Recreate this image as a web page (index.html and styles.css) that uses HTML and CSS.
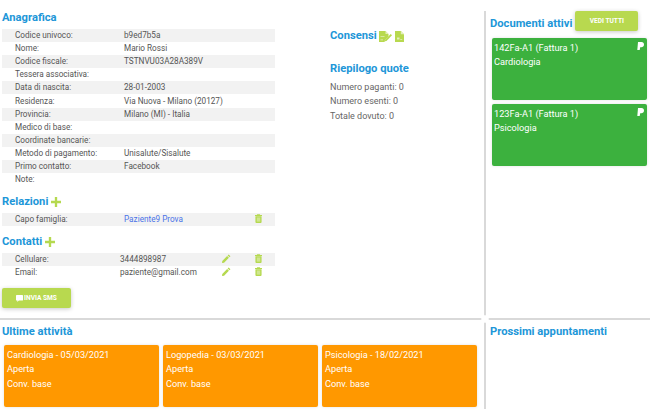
FILE: index.html
```html
<!DOCTYPE html>
<html lang="it">
<head>
<meta charset="utf-8">
<title>Scheda paziente</title>
<link rel="stylesheet" href="styles.css">
</head>
<body>
<svg width="0" height="0" class="defs">
  <symbol id="plus" viewBox="0 0 12 12"><path d="M4.600 0h2.800v4.600H12v2.800H7.400V12H4.600V7.400H0V4.600h4.600z"/></symbol>
  <symbol id="trash" viewBox="0 0 8 10"><path d="M2.500 0h3l.5 1h2v1H0V1h2zM.5 2.500h7V9a1 1 0 0 1-1 1h-5a1 1 0 0 1-1-1z"/><path class="trash-in" d="M2 3.800h4v4.800H2z"/></symbol>
  <symbol id="pen" viewBox="0 0 10 10"><path d="M7.400.6 9.400 2.600 8.300 3.700 6.300 1.700zM5.700 2.300l2 2L2.300 9.700 0 10l.3-2.300z"/></symbol>
  <symbol id="paypal" viewBox="0 0 7 8"><path d="M1 0h3.500C6.200 0 7 1 7 2.500 7 4.200 5.800 5.200 4.300 5.200H3.200L2.700 8H0.300z"/></symbol>
</svg>
<main class="board">
  <section class="panel top-left">
    <div class="col-main">
      <h2 class="title first">Anagrafica</h2>
      <div class="rows">
        <div class="row"><span class="key">Codice univoco:</span><span>b9ed7b5a</span></div>
        <div class="row"><span class="key">Nome:</span><span>Mario Rossi</span></div>
        <div class="row"><span class="key">Codice fiscale:</span><span>TSTNVU03A28A389V</span></div>
        <div class="row"><span class="key">Tessera associativa:</span></div>
        <div class="row"><span class="key">Data di nascita:</span><span>28-01-2003</span></div>
        <div class="row"><span class="key">Residenza:</span><span>Via Nuova - Milano (20127)</span></div>
        <div class="row"><span class="key">Provincia:</span><span>Milano (MI) - Italia</span></div>
        <div class="row"><span class="key">Medico di base:</span></div>
        <div class="row"><span class="key">Coordinate bancarie:</span></div>
        <div class="row"><span class="key">Metodo di pagamento:</span><span>Unisalute/Sisalute</span></div>
        <div class="row"><span class="key">Primo contatto:</span><span>Facebook</span></div>
        <div class="row"><span class="key">Note:</span></div>
      </div>
      <h2 class="title rel">Relazioni <svg class="plus"><use href="#plus"/></svg></h2>
      <div class="rows">
        <div class="row"><span class="key">Capo famiglia:</span><a class="link" href="#">Paziente9 Prova</a><svg class="trash"><use href="#trash"/></svg></div>
      </div>
      <h2 class="title rel">Contatti <svg class="plus"><use href="#plus"/></svg></h2>
      <div class="rows contacts">
        <div class="row"><span class="key narrow">Cellulare:</span><span class="val">3444898987</span><svg class="pen"><use href="#pen"/></svg><svg class="trash near"><use href="#trash"/></svg></div>
        <div class="row"><span class="key narrow">Email:</span><span class="val">paziente@gmail.com</span><svg class="pen"><use href="#pen"/></svg><svg class="trash near"><use href="#trash"/></svg></div>
      </div>
      <button class="btn sms" type="button">
        <svg class="chat" viewBox="0 0 10 10"><path d="M1 0h8a1 1 0 0 1 1 1v6a1 1 0 0 1-1 1H4L2 10V8H1a1 1 0 0 1-1-1V1a1 1 0 0 1 1-1z"/></svg>INVIA SMS
      </button>
    </div>
    <div class="col-side">
      <h2 class="title consensi">Consensi
        <svg class="doc" viewBox="0 0 13 11"><path d="M0 0h6.500L9.500 3v2.600L6 9 5.600 11H0z"/><path class="doc-in" d="M6.500 0v3h3zM1.500 8.500h2.500v.8H1.500zM1.500 5h4v.8h-4z"/><path d="M6.200 8.700 11.700 3 13 4.300 7.500 10 5.900 10.300z"/></svg>
        <svg class="doc2" viewBox="0 0 9 11"><path d="M0 0h5.800L9 3.200V11H0z"/><path class="doc-in" d="M5.800 0v3.200H9zM2 6.500h2.500v2H2zM5.200 8h2v.8h-2z"/></svg>
      </h2>
      <h2 class="title quote">Riepilogo quote</h2>
      <p class="line">Numero paganti: 0</p>
      <p class="line">Numero esenti: 0</p>
      <p class="line">Totale dovuto: 0</p>
    </div>
  </section>
  <section class="panel top-right">
    <div class="docs-head">
      <h2 class="title">Documenti attivi</h2>
      <button class="btn all" type="button">VEDI TUTTI</button>
    </div>
    <article class="card green">
      <svg class="pp"><use href="#paypal"/></svg>
      <p>142Fa-A1 (Fattura 1)</p><p>Cardiologia</p>
    </article>
    <article class="card green">
      <svg class="pp"><use href="#paypal"/></svg>
      <p>123Fa-A1 (Fattura 1)</p><p>Psicologia</p>
    </article>
  </section>
  <section class="panel bottom-left">
    <h2 class="title">Ultime attività</h2>
    <div class="activities">
      <article class="card orange"><p>Cardiologia - 05/03/2021</p><p>Aperta</p><p>Conv. base</p></article>
      <article class="card orange"><p>Logopedia - 03/03/2021</p><p>Aperta</p><p>Conv. base</p></article>
      <article class="card orange"><p>Psicologia - 18/02/2021</p><p>Aperta</p><p>Conv. base</p></article>
    </div>
  </section>
  <section class="panel bottom-right">
    <h2 class="title">Prossimi appuntamenti</h2>
  </section>
  <span class="knot"></span>
</main>
</body>
</html>
```
FILE: styles.css
```css
* { box-sizing: border-box; }
html, body { margin: 0; padding: 0; background: #fff; }
body { width: 650px; height: 420px; overflow: hidden; font-family: Roboto, "Liberation Sans", sans-serif; color: #555; }
.defs { position: absolute; }
.board { position: relative; margin-top: 11px; display: grid; grid-template-columns: 486px 164px; grid-template-rows: 309px 89px; width: 650px; }
.panel { min-width: 0; }
.top-left { display: flex; border-right: 2px solid #d9d9d9; border-bottom: 2px solid #d9d9d9; }
.top-right { border-bottom: 2px solid #d9d9d9; padding: 0 3px 0 4px; }
.bottom-left { border-right: 2px solid #d9d9d9; padding: 5px 0 0 2px; }
.bottom-right { padding: 5px 0 0 4px; }
.knot { position: absolute; left: 482px; top: 305px; width: 6px; height: 6px; background: #fff; transform: rotate(45deg); }
.title { margin: 0; font-size: 11.200px; line-height: 14px; font-weight: 700; color: #2196d8; display: flex; align-items: center; gap: 3px; white-space: nowrap; }
.col-main { width: 273px; margin-left: 2px; }
.first { height: 18px; padding-bottom: 5px; padding-top: 1px; }
.rows { font-size: 8.200px; color: #555; }
.row { display: flex; align-items: center; height: 13.100px; line-height: 13px; padding-left: 13px; white-space: nowrap; }
.row:nth-child(odd) { background: #f2f2f2; }
.key { width: 109px; flex: none; }
.key.narrow { width: 105px; }
.link { color: #4a72e8; text-decoration: none; width: 131px; }
.trash { width: 7px; height: 9px; fill: #b5d94f; margin-top: -3px; }
.trash-in { fill: #cfe68f; }
.near { margin-left: 24px; }
.pen { width: 9px; height: 9px; fill: #b5d94f; margin-top: -3px; margin-left: 1px; }
.val { width: 101px; flex: none; }
.plus { width: 10px; height: 10px; fill: #b5d94f; }
.rel { margin-top: 8px; height: 15px; margin-bottom: 4px; }
.btn { border: 0; border-radius: 2px; background: #b8d94f; color: #fff; font: 700 6.600px Roboto, sans-serif; box-shadow: 0 1px 4px rgba(0,0,0,.22); display: flex; align-items: center; justify-content: center; padding: 0; }
.sms { width: 69px; height: 20px; margin-top: 9px; gap: 1px; }
.chat { width: 7px; height: 7px; fill: #fff; }
.col-side { margin-left: 55px; }
.consensi { margin-top: 18px; gap: 2px; }
.doc { width: 13px; height: 11px; fill: #b8d94f; }
.doc2 { width: 9px; height: 11px; fill: #b8d94f; margin-left: 1px; }
.doc-in { fill: #e4f0bb; }
.quote { margin-top: 19px; margin-bottom: 4px; }
.line { margin: 0; font-size: 9px; line-height: 14.400px; color: #666; }
.docs-head { display: flex; align-items: flex-start; height: 27px; }
.docs-head .title { margin-top: 6px; }
.all { width: 63px; height: 20px; margin-left: 3px; }
.card { position: relative; border-radius: 2px; color: #fff; font-size: 9.200px; line-height: 14.400px; padding: 3px 2px; height: 62px; box-shadow: 0 0 3px rgba(0,0,0,.12); }
.card p { margin: 0; }
.green { background: #3cb13e; margin: 0 0 4px 2px; }
.orange { background: #ff9800; width: 155px; padding-left: 3px; }
.pp { position: absolute; top: 4px; right: 3px; width: 7px; height: 8px; fill: #fff; }
.activities { display: flex; gap: 4px; margin: 6px 0 0 2px; }
```
